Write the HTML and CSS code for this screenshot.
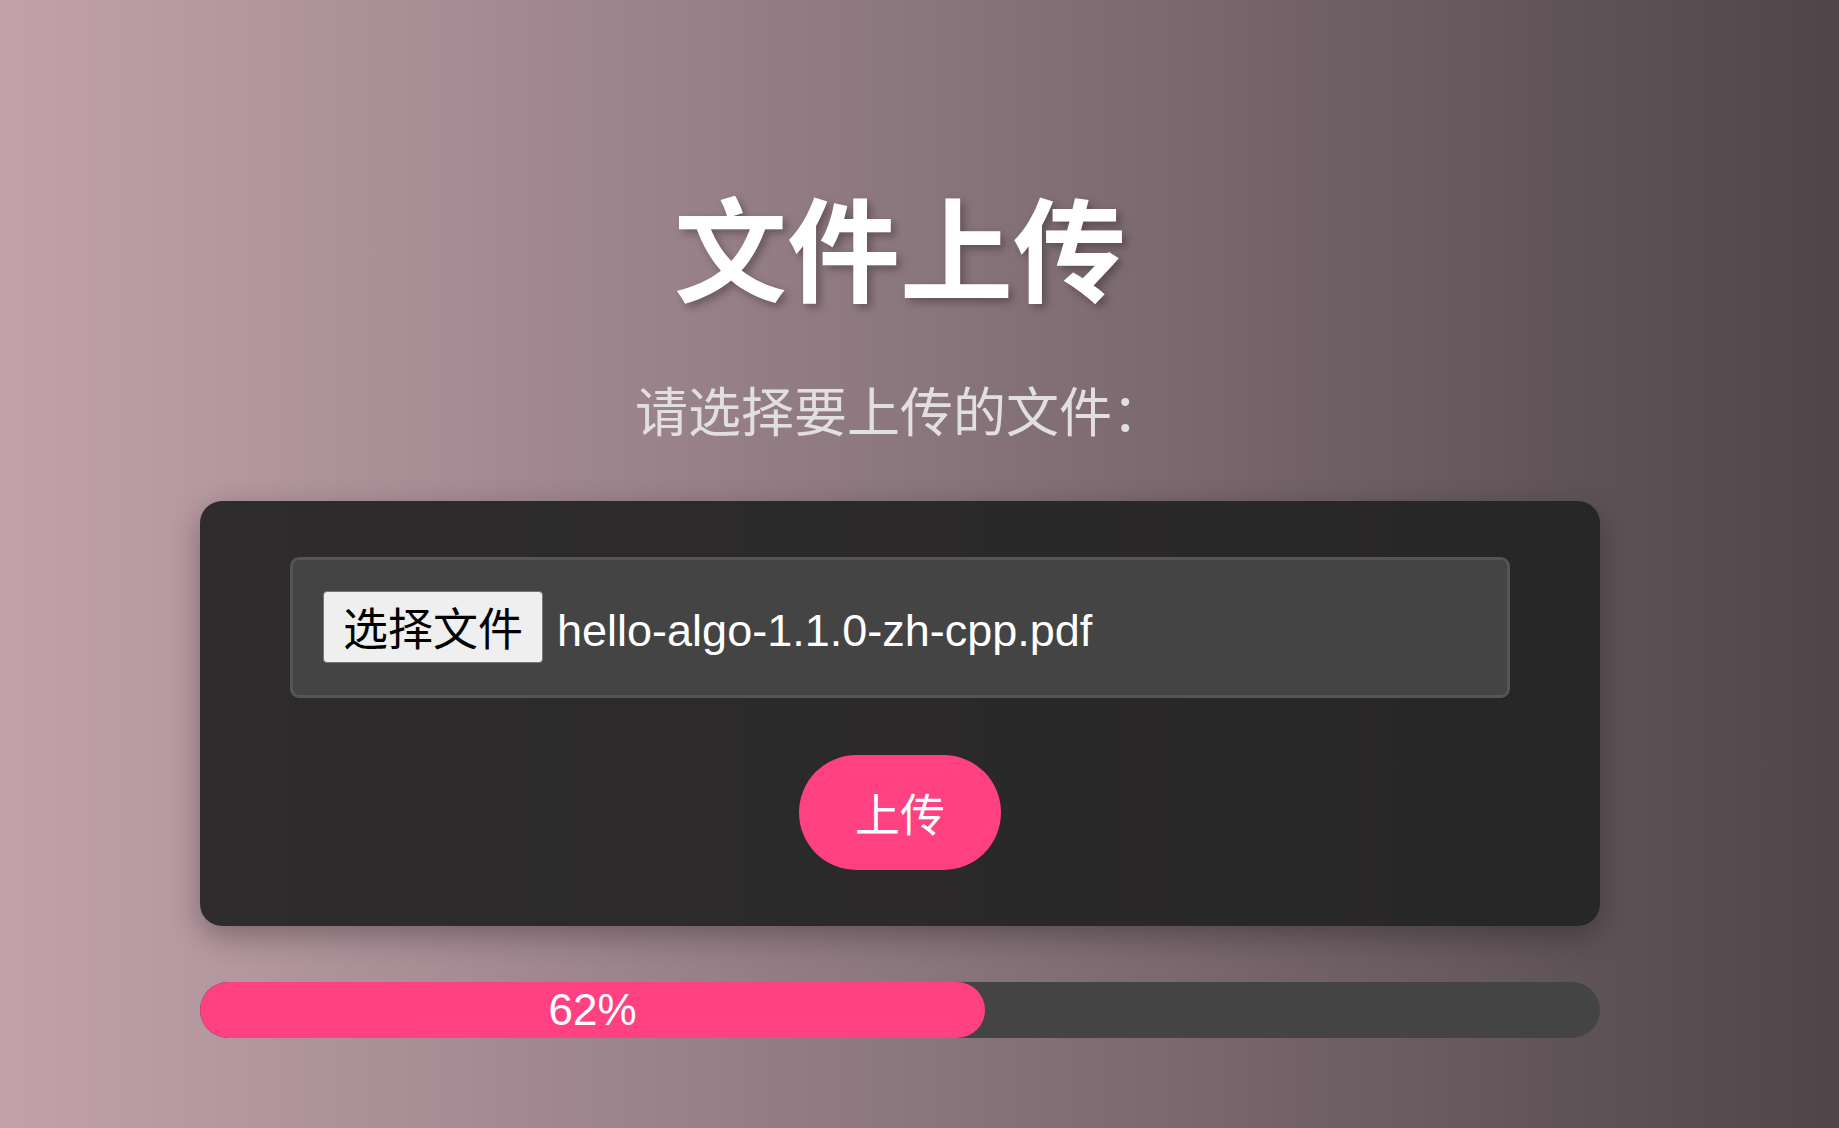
FILE: index.html
```html
<!DOCTYPE html>
<html lang="zh-CN">
<head>
<meta charset="utf-8">
<title>文件上传</title>
<link rel="stylesheet" href="styles.css">
</head>
<body>
<main class="page">
  <h1 class="title">文件上传</h1>
  <p class="subtitle">请选择要上传的文件：</p>
  <section class="card">
    <div class="file-box">
      <span class="file-btn">选择文件</span>
      <span class="file-name">hello-algo-1.1.0-zh-cpp.pdf</span>
    </div>
    <div class="actions">
      <button class="upload-btn" type="button">上传</button>
    </div>
  </section>
  <div class="progress">
    <div class="progress-fill" style="width: 785px;">62%</div>
  </div>
</main>
</body>
</html>
```

FILE: styles.css
```css
html, body {
  margin: 0;
  padding: 0;
}

body {
  min-height: 1128px;
  background: linear-gradient(to right, #c2a2aa 0%, #8a767d 50%, #4f4548 100%);
  font-family: "Liberation Sans", "Noto Sans CJK SC", sans-serif;
  padding-top: 188px;
  box-sizing: border-box;
}

.page {
  width: 1400px;
  margin-left: 200px;
  display: flex;
  flex-direction: column;
}

.title {
  margin: 0;
  font-family: "Noto Sans CJK SC", sans-serif;
  font-size: 113px;
  line-height: 113px;
  font-weight: 700;
  color: #ffffff;
  text-align: center;
  text-shadow: 4px 4px 8px rgba(0, 0, 0, 0.3);
}

.subtitle {
  margin: 82px 0 0;
  font-family: "Noto Sans CJK SC", sans-serif;
  font-size: 53px;
  line-height: 53px;
  color: #e2dfe0;
  text-align: center;
}

.card {
  margin-top: 65px;
  background: rgba(36, 35, 35, 0.93);
  border-radius: 22px;
  padding: 56px 90px;
  box-shadow: 0 10px 30px rgba(0, 0, 0, 0.3);
  display: flex;
  flex-direction: column;
}

.file-box {
  background: #444444;
  border: 3px solid #555555;
  border-radius: 9px;
  padding: 31px 30px 32px;
  display: flex;
  align-items: center;
  gap: 14px;
}

.file-btn {
  display: inline-block;
  background: #efefef;
  border: 1px solid #767676;
  border-radius: 4px;
  padding: 0 19px;
  height: 70px;
  line-height: 70px;
  font-family: "Noto Sans CJK SC", sans-serif;
  font-size: 45px;
  color: #000000;
}

.file-name {
  font-size: 45px;
  line-height: 52px;
  margin-top: 8px;
  color: #ffffff;
}

.actions {
  margin-top: 57px;
  display: flex;
  justify-content: center;
}

.upload-btn {
  border: none;
  background: #ff4081;
  color: #ffffff;
  font-family: "Noto Sans CJK SC", sans-serif;
  font-size: 45px;
  line-height: 52px;
  height: 115px;
  width: 202px;
  padding: 0;
  border-radius: 58px;
  cursor: pointer;
}

.progress {
  margin-top: 56px;
  height: 56px;
  border-radius: 28px;
  background: #444444;
  overflow: hidden;
  display: flex;
}

.progress-fill {
  height: 56px;
  line-height: 56px;
  background: #ff4081;
  border-radius: 28px;
  color: #ffffff;
  font-size: 44px;
  text-align: center;
}
```
